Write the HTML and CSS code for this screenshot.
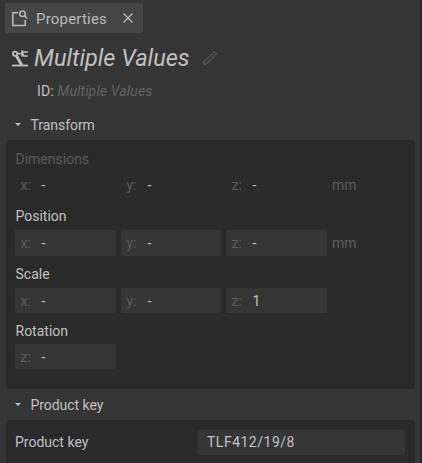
FILE: index.html
```html
<!DOCTYPE html>
<html lang="en">
<head>
<meta charset="utf-8">
<title>Properties</title>
<link rel="stylesheet" href="styles.css">
</head>
<body>
<main class="pane">
  <div class="tab">
    <svg class="tab-icon" width="16" height="17" viewBox="0 0 16 17" fill="none" stroke="currentColor" stroke-width="1.5"><path d="M6 2.8H.8V15.5H13.2V10"/><circle cx="10.5" cy="3.7" r="2.8"/><path d="M12.5 5.8L15.2 8.5"/></svg>
    <span class="tab-label">Properties</span>
    <svg class="close" width="10" height="10" viewBox="0 0 10 10" fill="none" stroke="currentColor" stroke-width="1.3"><path d="M.5.5L9.5 9.5M9.5.5L.5 9.5"/></svg>
  </div>
  <header class="title">
    <svg class="robot" width="16" height="17" viewBox="0 0 16 17" fill="none" stroke="currentColor"><path d="M0 15.5H16" stroke-width="1.8"/><path d="M4.3 5.5L9.7 15" stroke-width="3"/><circle cx="3" cy="3.7" r="2.1" stroke-width="1.7"/><path d="M5 3.7H10M15.8 2H12L10.2 3.7L12 6H15.8M10.2 .3V6.5" stroke-width="1.7"/></svg>
    <h1>Multiple Values</h1>
    <svg class="pencil" width="14" height="14" viewBox="0 0 14 14" fill="none" stroke="currentColor" stroke-width="1"><path d="M.8 13.2V10.9L9.3 2.4L11.6 4.7L3.1 13.2ZM10.4 1.5L11.4.7L13.3 2.6L12.5 3.6"/></svg>
  </header>
  <div class="id-row"><span>ID:</span> <em>Multiple Values</em></div>

  <div class="section-head"><i class="caret"></i><h2>Transform</h2></div>
  <section class="card transform">
    <div class="group">
      <div class="label muted">Dimensions</div>
      <div class="fields">
        <div class="field flat"><span>x:</span><b>-</b></div>
        <div class="field flat"><span>y:</span><b>-</b></div>
        <div class="field flat"><span>z:</span><b>-</b></div>
        <span class="unit">mm</span>
      </div>
    </div>
    <div class="group">
      <div class="label">Position</div>
      <div class="fields">
        <div class="field"><span>x:</span><b>-</b></div>
        <div class="field"><span>y:</span><b>-</b></div>
        <div class="field"><span>z:</span><b>-</b></div>
        <span class="unit">mm</span>
      </div>
    </div>
    <div class="group">
      <div class="label">Scale</div>
      <div class="fields">
        <div class="field"><span>x:</span><b>-</b></div>
        <div class="field"><span>y:</span><b>-</b></div>
        <div class="field"><span>z:</span><b>1</b></div>
      </div>
    </div>
    <div class="group last">
      <div class="label">Rotation</div>
      <div class="fields">
        <div class="field"><span>z:</span><b>-</b></div>
      </div>
    </div>
  </section>

  <div class="section-head product-head"><i class="caret"></i><h2>Product key</h2></div>
  <section class="card product">
    <div class="product-label">Product key</div>
    <div class="product-value">TLF412/19/8</div>
  </section>
</main>
</body>
</html>
```
FILE: styles.css
```css
* { box-sizing: border-box; }
body {
  margin: 0;
  height: 463px;
  overflow: hidden;
  background: #353535;
  color: #c0c0c0;
  font: 14px Roboto, "Liberation Sans", sans-serif;
  letter-spacing: 0;
}
.pane {
  height: 463px;
  overflow: hidden;
  padding: 3px 5px 0 6px;
  border-right: 2px solid #292929;
}
.tab {
  display: flex;
  align-items: center;
  width: 138px;
  height: 30px;
  margin-left: -1px;
  padding-left: 7px;
  border-radius: 2px;
  background: #454545;
  color: #b9b9b9;
}
.tab-label {
  width: 87px;
  margin-left: 8px;
  padding-top: 1px;
  font-size: 15px;
  letter-spacing: 0.2px;
}
.title {
  display: flex;
  align-items: center;
  height: 50px;
  padding-left: 6px;
}
.robot { margin-right: 6px; }
h1 {
  margin: 0;
  width: 155px;
  font-size: 23.5px;
  font-weight: 400;
  font-style: italic;
  letter-spacing: 0;
  white-space: nowrap;
}
.pencil { margin-left: 14px; color: #6c6c6c; }
.id-row {
  height: 26px;
  padding-left: 31px;
  line-height: 17px;
  letter-spacing: 0.15px;
}
.id-row em { color: #636363; }
.section-head {
  display: flex;
  align-items: center;
  height: 31px;
  padding-left: 9px;
}
.caret {
  width: 6px;
  border: 3px solid transparent;
  border-top-color: #c0c0c0;
  border-bottom: 0;
}
h2 {
  margin: 0 0 0 9.5px;
  font-size: 14px;
  font-weight: 400;
  letter-spacing: -0.05px;
}
.card {
  border-radius: 4px;
  background: #2a2a2a;
}
.transform { height: 249px; padding: 5px 9px; }
.label { height: 27px; line-height: 27px; padding-left: 0.5px; }
.muted { color: #5c5c5c; line-height: 28px; }
.group { margin-bottom: 6px; }
.group.last { margin-top: -2px; }
.last .label { line-height: 29px; }
.fields {
  display: grid;
  grid-template-columns: 101px 100px 101px auto;
  column-gap: 5px;
  height: 25px;
}
.field {
  display: flex;
  align-items: center;
  padding-left: 5.5px;
  border-radius: 1px;
  background: #353535;
}
.flat { background: transparent; }
.field span { width: 21px; color: #5c5c5c; }
.field b { font-weight: 400; }
.unit { line-height: 26px; color: #5c5c5c; }
.product {
  display: flex;
  justify-content: space-between;
  height: 60px;
  padding: 10px 10px 0 9px;
}
.product-label { line-height: 25px; }
.product-value {
  width: 207px;
  height: 25px;
  padding-left: 9px;
  line-height: 25px;
  letter-spacing: 0.5px;
  border-radius: 2px;
  background: #353535;
}
```
